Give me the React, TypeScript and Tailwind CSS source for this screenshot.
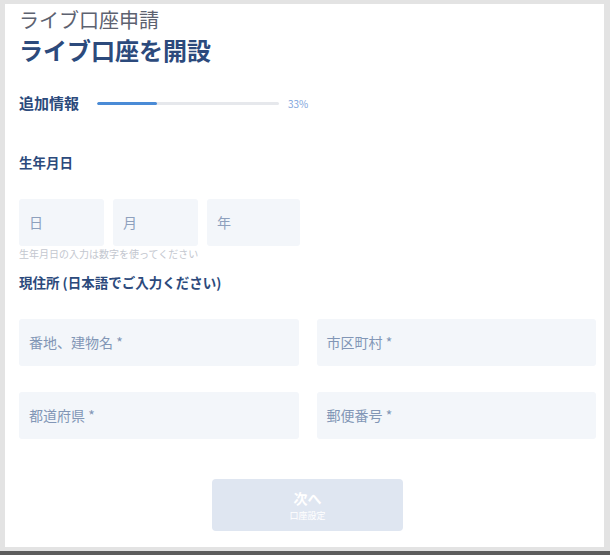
export default function App() {
  const font = { fontFamily: '"Noto Sans CJK JP", "Noto Sans", sans-serif' };

  return (
    <div className="w-[610px] h-[555px] bg-[#e3e3e3] flex flex-col" style={font}>
      <div className="flex-1 flex pt-[4px] pl-[5px] pr-[6px] pb-[4px]">
        <div className="flex-1 bg-white pl-[14px] pr-[8px] pt-[2px] flex flex-col">
          {/* titles */}
          <h1 className="text-[20px] leading-[28px] text-[#5d6270] font-normal">ライブ口座申請</h1>
          <h2 className="text-[24px] leading-[32px] text-[#2c4a7c] font-bold">ライブ口座を開設</h2>

          {/* progress */}
          <div className="mt-[27px] h-[20px] flex items-center">
            <span className="text-[15px] font-bold text-[#2c4a7c] w-[78px]">追加情報</span>
            <div className="w-[182px] h-[3px] bg-[#e6e8ec] rounded-full overflow-hidden">
              <div className="w-[60px] h-full bg-[#4a8bd6] rounded-full"></div>
            </div>
            <span className="ml-[9px] text-[10px] text-[#80a4dc]">33%</span>
          </div>

          {/* birth date */}
          <p className="mt-[39px] text-[13.5px] leading-[20px] font-bold text-[#2c4a7c]">生年月日</p>
          <div className="mt-[27px] flex gap-[9px]">
            {[
              { label: "日", w: "w-[85px]" },
              { label: "月", w: "w-[85px]" },
              { label: "年", w: "w-[93px]" },
            ].map((f) => (
              <div key={f.label} className={`${f.w} h-[47px] bg-[#f3f6fa] rounded-[3px] flex items-center pl-[10px]`}>
                <span className="text-[14px] text-[#8ea0bd]">{f.label}</span>
              </div>
            ))}
          </div>
          <p className="mt-[1px] text-[10px] leading-[14px] text-[#c3c7cf]">生年月日の入力は数字を使ってください</p>

          {/* address */}
          <p className="mt-[11px] text-[13.5px] leading-[20px] font-bold text-[#2c4a7c]">現住所 (日本語でご入力ください)</p>
          <div className="mt-[27px] grid grid-cols-2 gap-x-[18px] gap-y-[26px]">
            {["番地、建物名 *", "市区町村 *", "都道府県 *", "郵便番号 *"].map((p) => (
              <div key={p} className="h-[47px] bg-[#f3f6fa] rounded-[3px] flex items-center pl-[10px]">
                <span className="text-[14px] text-[#8296b6]">{p}</span>
              </div>
            ))}
          </div>

          {/* next button */}
          <div className="mt-[40px] flex justify-center">
            <button className="w-[191px] h-[52px] bg-[#dfe6f1] rounded-[4px] flex flex-col items-center justify-center text-white">
              <span className="text-[14px] leading-[18px] font-bold">次へ</span>
              <span className="text-[9px] leading-[12px] mt-[3px]">口座設定</span>
            </button>
          </div>
        </div>
      </div>
      <div className="h-[4px] bg-[#5c5c5c]"></div>
    </div>
  );
}
